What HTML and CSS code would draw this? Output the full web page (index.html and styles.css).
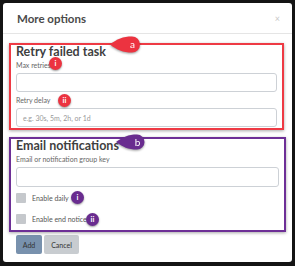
FILE: index.html
```html
<!DOCTYPE html>
<html lang="en">

<head>
    <meta charset="UTF-8">
    <title>More options</title>
    <link rel="stylesheet" href="styles.css">
</head>

<body>
    <div class="modal">
        <div class="modalHeader">
            <span class="title">More options</span>
            <span class="close">&times;</span>
        </div>
        <div class="modalBody">
            <div class="group retry">
                <h3>Retry failed task</h3>
                <label>Max retries</label>
                <div class="input"></div>
                <label>Retry delay</label>
                <div class="input"><span class="placeholder">e.g. 30s, 5m, 2h, or 1d</span></div>

                <div class="tag tagA">
                    <svg width="31" height="17" viewBox="0 0 31 17"><path d="M0 8.5 C7 3 13 0.5 22 0.5 A8 8 0 0 1 22 16.5 C13 16.5 7 14 0 8.5 Z" /></svg>
                    <span>a</span>
                </div>
                <div class="dot redDot dotR1">i</div>
                <div class="dot redDot dotR2">ii</div>
            </div>

            <div class="group email">
                <h3>Email notifications</h3>
                <label>Email or notification group key</label>
                <div class="input tall"></div>
                <div class="check first"><span class="box"></span>Enable daily</div>
                <div class="check"><span class="box"></span>Enable end notice</div>

                <div class="tag tagB">
                    <svg width="30" height="16" viewBox="0 0 30 16"><path d="M0 8 C7 3 12 0.5 21 0.5 A7.5 7.5 0 0 1 21 15.5 C12 15.5 7 13 0 8 Z" /></svg>
                    <span>b</span>
                </div>
                <div class="dot purpleDot dotP1">i</div>
                <div class="dot purpleDot dotP2">ii</div>
            </div>

            <div class="buttons">
                <div class="btn add">Add</div>
                <div class="btn cancel">Cancel</div>
            </div>
        </div>
    </div>
</body>

</html>
```

FILE: styles.css
```css
* {
    padding: 0;
    margin: 0;
    box-sizing: border-box;
}

body {
    background: #141414;
    font-family: Lato, "Open Sans", sans-serif;
}

.modal {
    width: 289px;
    height: 259px;
    margin: 3px;
    background: #fff;
    border-radius: 3px;
}

.modal .modalHeader {
    height: 31px;
    padding: 0 12px 0 14px;
    border-bottom: 1px solid #e5e5e5;
    display: flex;
    align-items: center;
    justify-content: space-between;
}

.modal .title {
    font-size: 11.5px;
    font-weight: bold;
    color: #4a4a4a;
}

.modal .close {
    font-size: 9px;
    color: #c8c8c8;
}

.modal .modalBody {
    padding: 9px 7px 0 6px;
}

.group {
    position: relative;
    padding: 0 5px;
    box-shadow: 0 1px 3px rgba(0, 0, 0, .35);
}

.group h3 {
    font-size: 12.5px;
    line-height: 14px;
    font-weight: bold;
    color: #3f3f3f;
}

.group label {
    display: block;
    margin-top: 2px;
    font-size: 7px;
    line-height: 9px;
    color: #666;
}

.group .input {
    height: 19px;
    margin-top: 3px;
    border: 1px solid #cdd1d6;
    border-radius: 3px;
    display: flex;
    align-items: center;
    padding-left: 6px;
}

.group .input.tall {
    height: 20px;
}

.group .placeholder {
    font-size: 7px;
    color: #999;
}

.retry {
    border: 2px solid #ee3a44;
    padding-bottom: 1px;
    margin-right: 1px;
}

.retry label + .input + label {
    margin-top: 4px;
}

.email {
    margin-top: 7px;
    border: 2px solid #6d2f96;
    padding-bottom: 6px;
    margin-right: -1px;
}

.check {
    display: flex;
    align-items: center;
    height: 10px;
    margin-top: 11px;
    font-size: 7px;
    color: #555;
}

.check.first {
    margin-top: 6px;
}

.check .box {
    width: 10px;
    height: 10px;
    margin-right: 6px;
    background: #c5c8cc;
    border-radius: 1px;
}

.buttons {
    display: flex;
    gap: 2px;
    margin-top: 3px;
    padding-left: 7px;
}

.btn {
    height: 19px;
    font-size: 7px;
    color: #333;
    display: flex;
    align-items: center;
    justify-content: center;
    border-radius: 2px;
}

.btn.add {
    width: 26px;
    background: #7891ad;
}

.btn.cancel {
    width: 35px;
    background: #c8ccd0;
}

.tag {
    position: absolute;
    filter: drop-shadow(0 1px 1px rgba(0, 0, 0, .4));
}

.tag svg {
    display: block;
}

.tag span {
    position: absolute;
    top: 0;
    right: 0;
    width: 17px;
    font-size: 10px;
    line-height: 16px;
    color: #fff;
    text-align: center;
}

.tagA {
    left: 99px;
    top: -9px;
}

.tagA path {
    fill: #ec3340;
}

.tagB {
    left: 105px;
    top: -5px;
}

.tagB path {
    fill: #692c8f;
}

.dot {
    position: absolute;
    width: 13px;
    height: 13px;
    border-radius: 50%;
    color: #fff;
    font-size: 7.5px;
    font-weight: bold;
    line-height: 13px;
    text-align: center;
    box-shadow: 0 1px 2px rgba(0, 0, 0, .4);
}

.redDot {
    background: #ec3340;
}

.purpleDot {
    background: #692c8f;
}

.dotR1 {
    left: 38px;
    top: 12px;
}

.dotR2 {
    left: 47px;
    top: 49px;
}

.dotP1 {
    left: 60px;
    top: 52px;
}

.dotP2 {
    left: 75px;
    top: 74px;
}
```
